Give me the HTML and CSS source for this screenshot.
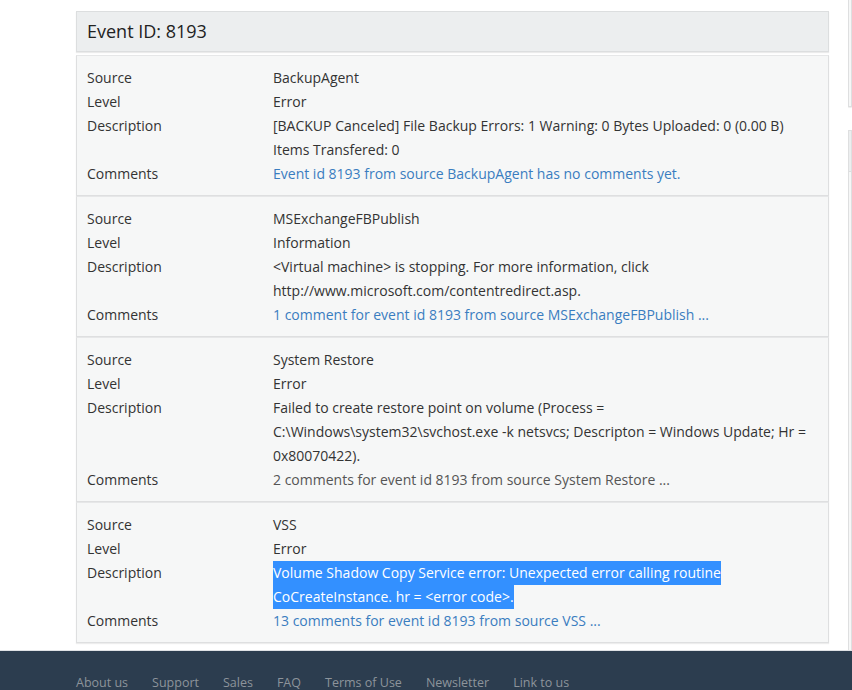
FILE: index.html
```html
<!DOCTYPE html>
<html>
<head>
<meta charset="utf-8">
<link rel="stylesheet" href="styles.css">
</head>
<body>
<div class="page">
  <main class="main">
    <div class="head-panel">Event ID: 8193</div>

    <div class="event">
      <div class="lbl">Source</div><div class="val">BackupAgent</div>
      <div class="lbl">Level</div><div class="val">Error</div>
      <div class="lbl">Description</div><div class="val">[BACKUP Canceled] File Backup Errors: 1 Warning: 0 Bytes Uploaded: 0 (0.00 B) Items Transfered: 0</div>
      <div class="lbl">Comments</div><div class="val"><a class="link" href="#">Event id 8193 from source BackupAgent has no comments yet.</a></div>
    </div>

    <div class="event">
      <div class="lbl">Source</div><div class="val">MSExchangeFBPublish</div>
      <div class="lbl">Level</div><div class="val">Information</div>
      <div class="lbl">Description</div><div class="val">&lt;Virtual machine&gt; is stopping. For more information, click http://www.microsoft.com/contentredirect.asp.</div>
      <div class="lbl">Comments</div><div class="val"><a class="link" href="#">1 comment for event id 8193 from source MSExchangeFBPublish ...</a></div>
    </div>

    <div class="event">
      <div class="lbl">Source</div><div class="val">System Restore</div>
      <div class="lbl">Level</div><div class="val">Error</div>
      <div class="lbl">Description</div><div class="val">Failed to create restore point on volume (Process = C:\Windows\system32\svchost.exe -k netsvcs; Descripton = Windows Update; Hr = 0x80070422).</div>
      <div class="lbl">Comments</div><div class="val"><a class="link visited" href="#">2 comments for event id 8193 from source System Restore ...</a></div>
    </div>

    <div class="event">
      <div class="lbl">Source</div><div class="val">VSS</div>
      <div class="lbl">Level</div><div class="val">Error</div>
      <div class="lbl">Description</div><div class="val"><span class="sel">Volume Shadow Copy Service error: Unexpected error calling routine CoCreateInstance. hr = &lt;error code&gt;.</span></div>
      <div class="lbl">Comments</div><div class="val"><a class="link" href="#">13 comments for event id 8193 from source VSS ...</a></div>
    </div>
  </main>
  <aside class="side">
    <div class="side-box top"></div>
    <div class="side-box second">
      <div class="side-head"></div>
    </div>
  </aside>
</div>
<footer class="footer">
  <nav class="foot-links">
    <a href="#">About us</a>
    <a href="#">Support</a>
    <a href="#">Sales</a>
    <a href="#">FAQ</a>
    <a href="#">Terms of Use</a>
    <a href="#">Newsletter</a>
    <a href="#">Link to us</a>
  </nav>
</footer>
</body>
</html>
```

FILE: styles.css
```css
html, body {
  margin: 0;
  padding: 0;
  background: #fff;
}
body {
  font-family: "Open Sans", "Liberation Sans", sans-serif;
  font-size: 14px;
  line-height: 24px;
  color: #333;
  overflow: hidden;
  height: 690px;
}
.page {
  display: flex;
  gap: 19px;
  padding: 11px 0 0 76px;
  height: 650px;
  box-sizing: border-box;
  overflow: hidden;
}
.main {
  width: 753px;
  flex: none;
}
.head-panel {
  background: #eceeef;
  border: 1px solid #dcdedf;
  box-shadow: 0 1px 1px rgba(0,0,0,0.08);
  padding: 7px 10px 8px;
  font-size: 18px;
  line-height: 24px;
  color: #222;
  margin-bottom: 3px;
}
.event {
  display: grid;
  grid-template-columns: 186px 1fr;
  background: #f6f7f7;
  border: 1px solid #dedfe0;
  border-top-color: #e6e7e8;
  box-shadow: 0 1px 1px rgba(0,0,0,0.07);
  padding: 10px 10px 9px;
  margin-bottom: 0;
}
.lbl, .val {
  line-height: 24px;
}
.link {
  color: #3a7dc0;
  text-decoration: none;
}
.link.visited {
  color: #555;
}
.sel {
  background: #3390ff;
  color: #fff;
  padding: 2px 0 3px;
}
.side {
  flex: 1;
  overflow: hidden;
  margin-top: -11px;
}
.side-box {
  background: #f6f7f7;
  border: 1px solid #dedfe0;
  box-shadow: 0 1px 1px rgba(0,0,0,0.07);
}
.side-box.top {
  height: 106px;
  border-top: none;
}
.side-box.second {
  margin-top: 23px;
  height: 600px;
}
.side-head {
  height: 40px;
  background: #eceeef;
  border-bottom: 1px solid #dcdedf;
}
.footer {
  background: #2c3d4f;
  border-top: 1px solid #dfe2e5;
  height: 40px;
  padding: 20px 0 0 76px;
  box-sizing: border-box;
}
.foot-links {
  display: flex;
  gap: 24px;
  font-size: 12.5px;
  line-height: 24px;
}
.foot-links a {
  color: #8d949b;
  text-decoration: none;
}
```
